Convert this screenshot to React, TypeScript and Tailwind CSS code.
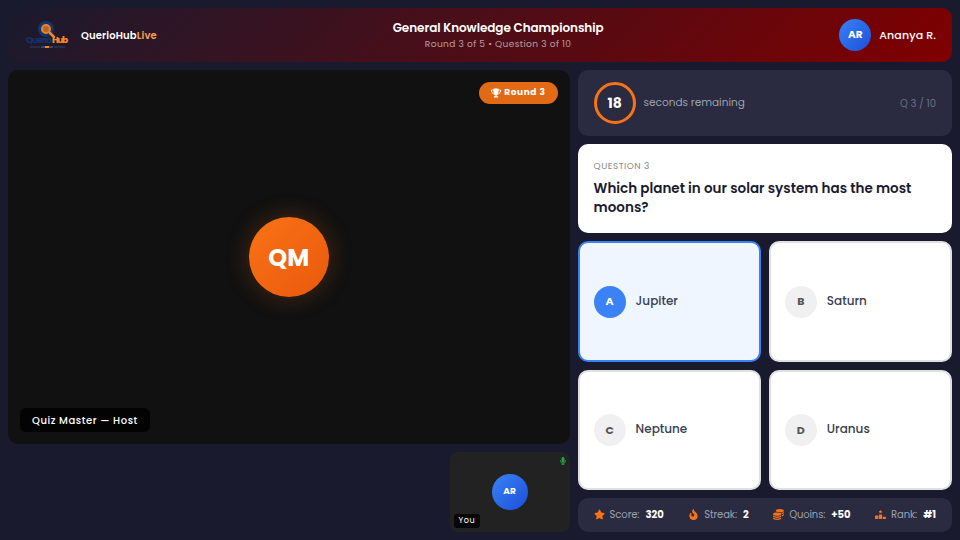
import React from 'react';
import { FaCoins, FaFireFlameCurved, FaMicrophone, FaRankingStar, FaStar, FaTrophy } from 'react-icons/fa6';

const FONT = "font-['Poppins','Inter','Liberation_Sans',sans-serif]";

const Logo: React.FC = () => (
  <svg width="44" height="32" viewBox="0 0 44 32" className="shrink-0">
    <circle cx="20" cy="10" r="6.5" fill="#e8852c" stroke="#10366f" strokeWidth="3" />
    <circle cx="20" cy="10" r="3" fill="#b9651f" />
    <path d="M24 14l4 4" stroke="#f0872a" strokeWidth="2.5" strokeLinecap="round" />
    <text x="0" y="24" fontSize="9" fontWeight="700" fill="#12336b" textLength="26">Querio</text>
    <text x="26" y="24" fontSize="9" fontWeight="800" fill="#f0872a" textLength="16">Hub</text>
    <path d="M4 28h10M28 28h11" stroke="#3b5b8f" strokeWidth="0.6" />
    <rect x="15" y="27" width="12" height="2" fill="#34486b" />
    <rect x="19" y="27" width="4" height="2" fill="#f0872a" />
  </svg>
);

const Option: React.FC<{ letter: string; label: string; active?: boolean; lifted?: boolean }> = ({ letter, label, active, lifted }) => (
  <div
    className={
      active
        ? 'flex items-center gap-[10px] rounded-[10px] border-2 border-[#3b82f6] bg-[#eff6ff] px-[14px]'
        : 'flex items-center gap-[10px] rounded-[10px] border-2 border-[#e0e0e0] bg-white px-[14px]'
    }
  >
    <div
      className={
        active
          ? 'flex h-8 w-8 items-center justify-center rounded-full bg-[#3b82f6] text-[11px] font-bold text-white'
          : 'flex h-8 w-8 items-center justify-center rounded-full bg-[#f0f0f0] text-[11px] font-bold text-[#555555]'
      }
    >
      {letter}
    </div>
    <span className={lifted ? 'pb-[3px] text-xs font-medium text-[#374151]' : 'pb-px text-xs font-medium text-[#374151]'}>{label}</span>
  </div>
);

const Stat: React.FC<{ icon: React.ReactNode; label: string; value: string }> = ({ icon, label, value }) => (
  <div className="flex items-center gap-[5px] text-[10px]">
    <span className="text-[11px] text-[#f97316]">{icon}</span>
    <span className="tracking-[-0.1px] text-[#9ca3af]">{label}</span>
    <span className="ml-px font-bold text-white">{value}</span>
  </div>
);

export default function App() {
  return (
    <div className={`${FONT} flex h-[540px] w-[960px] flex-col gap-2 overflow-hidden bg-[#1a1a2e] p-2`}>
      <header className="flex h-[54px] shrink-0 items-center justify-between rounded-[10px] bg-[linear-gradient(135deg,#1a1a2e,#800000)] pr-4 pl-[18px]">
        <div className="flex items-center gap-[11px]">
          <Logo />
          <span className="text-[10px] font-semibold tracking-[0.15px] text-white">
            QuerioHub<span className="text-[#f6a04d]">Live</span>
          </span>
        </div>
        <div className="text-center">
          <div className="text-xs leading-[18px] font-semibold tracking-[-0.07px] text-white">General Knowledge Championship</div>
          <div className="text-[9px] leading-[14px] tracking-[0.4px] text-white/60">Round 3 of 5 • Question 3 of 10</div>
        </div>
        <div className="flex items-center gap-2">
          <div className="flex h-8 w-8 items-center justify-center rounded-full bg-gradient-to-br from-[#3b82f6] to-[#1d4ed8] text-[10.5px] font-bold text-white">
            AR
          </div>
          <span className="text-[11px] font-medium tracking-[0.1px] text-white">Ananya R.</span>
        </div>
      </header>

      <main className="grid min-h-0 flex-1 grid-cols-[3fr_2fr] gap-2">
        <section className="flex min-h-0 flex-col gap-2">
          <div className="relative flex flex-1 items-center justify-center rounded-[10px] bg-[#111111]">
            <div className="absolute top-3 right-3 flex h-[22px] items-center gap-[3px] rounded-full bg-[#e36a14] px-3 text-[9px] font-bold tracking-[0.6px] text-white">
              <FaTrophy className="text-[10px]" />
              Round 3
            </div>
            <div className="flex h-20 w-20 items-center justify-center rounded-full bg-gradient-to-br from-[#f97316] to-[#ea580c] pt-px text-2xl font-bold text-white shadow-[0_0_24px_rgba(249,115,22,0.25)]">
              QM
            </div>
            <div className="absolute bottom-3 left-3 flex h-6 items-center rounded-md bg-black/80 px-3 text-[10px] font-medium tracking-[0.55px] text-white">
              Quiz Master — Host
            </div>
          </div>
          <div className="flex justify-end">
            <div className="relative flex h-20 w-[120px] items-center justify-center rounded-lg bg-[#222222]">
              <div className="flex h-9 w-9 items-center justify-center rounded-full bg-gradient-to-br from-[#3b82f6] to-[#1d4ed8] text-[9px] font-bold text-white">
                AR
              </div>
              <FaMicrophone className="absolute top-[5px] right-[3px] text-[8px] text-[#22a33f]" />
              <div className="absolute bottom-1 left-1 rounded-[3px] bg-black/80 px-[5px] py-px text-[8px] tracking-[0.5px] text-white">
                You
              </div>
            </div>
          </div>
        </section>

        <section className="flex min-h-0 flex-col gap-2">
          <div className="flex h-[66px] shrink-0 items-center gap-2 rounded-[10px] bg-[#2a2a40] px-4">
            <div className="flex h-[42px] w-[42px] items-center justify-center rounded-full border-[3px] border-[#f97316] pb-px text-sm font-bold text-white">
              18
            </div>
            <span className="text-[10.5px] text-[#9ca3af]">seconds remaining</span>
            <span className="ml-auto text-[10px] text-[#6b7280]">Q 3 / 10</span>
          </div>

          <div className="h-[89px] shrink-0 rounded-[10px] bg-white px-4 py-[14px]">
            <div className="text-[9px] leading-[16px] tracking-[0.5px] text-[#888888]">QUESTION 3</div>
            <div className="mt-[5px] text-[13.5px] leading-[19px] font-semibold text-[#1a1a2e]">
              Which planet in our solar system has the most moons?
            </div>
          </div>

          <div className="grid min-h-0 flex-1 grid-cols-2 grid-rows-[121px_120px] gap-2">
            <Option letter="A" label="Jupiter" active />
            <Option letter="B" label="Saturn" />
            <Option letter="C" label="Neptune" lifted />
            <Option letter="D" label="Uranus" lifted />
          </div>

          <div className="flex h-[34px] shrink-0 items-center justify-between rounded-[10px] bg-[#2a2a40] px-4 pb-px">
            <Stat icon={<FaStar />} label="Score:" value="320" />
            <Stat icon={<FaFireFlameCurved />} label="Streak:" value="2" />
            <Stat icon={<FaCoins />} label="Quoins:" value="+50" />
            <Stat icon={<FaRankingStar />} label="Rank:" value="#1" />
          </div>
        </section>
      </main>
    </div>
  );
}
